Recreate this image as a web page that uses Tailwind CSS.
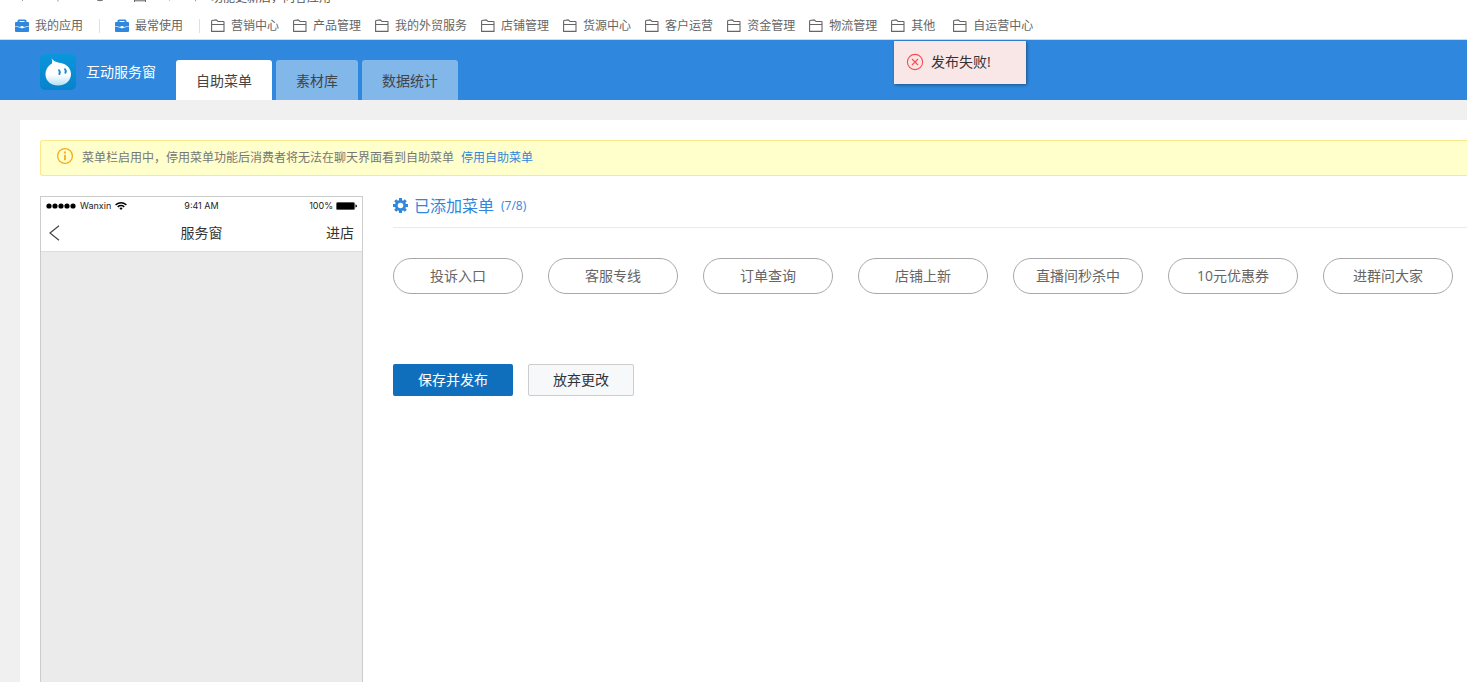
<!DOCTYPE html>
<html lang="zh-CN">
<head>
<meta charset="utf-8">
<meta name="viewport" content="width=device-width, initial-scale=1">
<title>互动服务窗</title>
<script src="https://cdn.jsdelivr.net/npm/@tailwindcss/browser@4"></script>
</head>
<body class="flex h-screen flex-col overflow-hidden bg-[#f0f0f0] font-['Open_Sans','Noto_Sans_CJK_SC',sans-serif] text-sm text-[#666]">
<svg class="hidden" aria-hidden="true">
  <symbol id="folder" viewBox="0 0 14 14"><path d="M.6 12.400V1.900q0-.4.400-.4L5.200.900 7 2.500H12.500q.5 0 .5.500V12.400zM.6 5.500H13" fill="none" stroke="#666" stroke-width="1.100"/></symbol>
  <symbol id="case" viewBox="0 0 14 14"><path fill-rule="evenodd" d="M2.500 3V2Q2.500 .5 4 .5h6Q11.500 .5 11.500 2v1H13q1 0 1 1v3L8.600 8 8.200 7H5.800l-.4 1L0 7V4q0-1 1-1zM4.500 3h5V2h-5z" fill="#2f88dd"/><path d="M0 7.600 5.400 8.800Q7 9.800 8.600 8.800L14 7.600V12q0 1-1 1H1q-1 0-1-1z" fill="#2f88dd"/></symbol>
</svg>

<nav class="shrink-0 border-b border-[#cfdbe6] bg-white text-xs" aria-label="应用导航">
  <div class="flex h-[3px] items-end overflow-hidden whitespace-nowrap text-[#555]">
    <svg class="h-[3px] w-[211px] shrink-0" viewBox="0 0 211 3" fill="none" stroke="#999" aria-hidden="true"><path d="M22.500 0v1M57.500 0l1 1.500M169.500 0v.6M195.500 0v1.200"/><path d="M97 0q3 1.500 6 0M134.500 0v2M145.500 0v2M135 .8h10" stroke="#666"/></svg>
    <span class="leading-[10px]">功能更新后，问答应用</span>
  </div>
  <div class="flex h-9 items-center pt-3 pb-0.5 pl-[15px] whitespace-nowrap">
    <a href="#" class="flex items-center gap-1.5"><svg class="size-3.5"><use href="#case"/></svg>我的应用</a>
    <span class="mr-[15px] ml-4 h-3.5 w-px bg-[#e0e0e0]"></span>
    <a href="#" class="flex items-center gap-1.5"><svg class="size-3.5"><use href="#case"/></svg>最常使用</a>
    <span class="mr-[11px] ml-4 h-3.5 w-px bg-[#e0e0e0]"></span>
    <div class="flex items-center gap-3.5">
      <a href="#" class="flex items-center gap-1.5"><svg class="size-3.5"><use href="#folder"/></svg>营销中心</a>
      <a href="#" class="flex items-center gap-1.5"><svg class="size-3.5"><use href="#folder"/></svg>产品管理</a>
      <a href="#" class="flex items-center gap-1.5"><svg class="size-3.5"><use href="#folder"/></svg>我的外贸服务</a>
      <a href="#" class="flex items-center gap-1.5"><svg class="size-3.5"><use href="#folder"/></svg>店铺管理</a>
      <a href="#" class="flex items-center gap-1.5"><svg class="size-3.5"><use href="#folder"/></svg>货源中心</a>
      <a href="#" class="flex items-center gap-1.5"><svg class="size-3.5"><use href="#folder"/></svg>客户运营</a>
      <a href="#" class="flex items-center gap-1.5"><svg class="size-3.5"><use href="#folder"/></svg>资金管理</a>
      <a href="#" class="flex items-center gap-1.5"><svg class="size-3.5"><use href="#folder"/></svg>物流管理</a>
      <a href="#" class="mr-1 flex items-center gap-1.5"><svg class="size-3.5"><use href="#folder"/></svg>其他</a>
      <a href="#" class="flex items-center gap-1.5"><svg class="size-3.5"><use href="#folder"/></svg>自运营中心</a>
    </div>
  </div>
</nav>

<header class="flex h-[60px] shrink-0 items-end bg-[#2f88dd] pl-10">
  <div class="mr-5 flex h-full items-center gap-2.5 pt-1 text-white">
    <svg class="size-9" viewBox="0 0 36 36" aria-hidden="true">
      <defs><linearGradient id="lg" x2="0" y2="1"><stop stop-color="#0a96dd"/><stop offset="1" stop-color="#0783cb"/></linearGradient>
      <linearGradient id="wg" x2="0" y2="1"><stop offset=".6" stop-color="#fff"/><stop offset="1" stop-color="#b5dff7"/></linearGradient></defs>
      <rect width="36" height="36" rx="5" fill="url(#lg)"/>
      <path d="M11.500 4.500Q13.500 7.500 18 8.500C26 9 31 14 31 20C31 27 25 31.500 18 31.500S5.500 27 5.500 20.500C5.500 15 8.500 11.500 12 9.500Q12.800 7.500 11.500 4.500Z" fill="url(#wg)"/>
      <path d="M19 16.200q1.400 1.600.4 3.800M25 15.200q1.400 1.600.4 3.600" fill="none" stroke="#1490d8" stroke-width="2" stroke-linecap="round"/>
    </svg>
    <h1>互动服务窗</h1>
  </div>
  <nav class="flex gap-1 text-[#444]" aria-label="主菜单">
    <a href="#" class="flex h-10 items-center rounded-t-[3px] bg-white px-5 pt-0.5" aria-current="page">自助菜单</a>
    <a href="#" class="flex h-10 items-center rounded-t-[3px] bg-[#82b7ea] px-5 pt-0.5">素材库</a>
    <a href="#" class="flex h-10 items-center rounded-t-[3px] bg-[#82b7ea] px-5 pt-0.5">数据统计</a>
  </nav>
</header>

<main class="mt-5 ml-5 flex min-h-0 flex-1 flex-col bg-white pt-5 pl-5">
  <div class="flex h-9 shrink-0 items-center rounded-l-[3px] border border-r-0 border-[#fbe78c] bg-[#ffffcb] pl-4 text-xs text-[#777]">
    <svg class="mr-[9px] mb-1 size-4 overflow-visible" viewBox="0 0 16 16" fill="none" stroke="#fbab18" aria-hidden="true"><circle cx="8" cy="8" r="7.400" stroke-width="1.300"/><path d="M8 3.500v2M8 6.800v5.400" stroke-width="1.800"/></svg>
    <p>菜单栏启用中，停用菜单功能后消费者将无法在聊天界面看到自助菜单</p>
    <a href="#" class="ml-[7px] text-[#2f88dd]">停用自助菜单</a>
  </div>

  <div class="mt-5 flex min-h-0 flex-1">
    <section class="w-[323px] shrink-0 border border-b-0 border-[#ccc] bg-[#ebebeb]" aria-label="手机预览">
      <div class="h-[55px] border-b border-[#ddd] bg-white text-[#333]">
        <div class="grid h-[18px] grid-cols-3 items-center px-[5px] font-['Inter',sans-serif] text-[9px] text-[#222]">
          <div class="flex items-center gap-1">
            <svg class="h-[6px] w-[30px]" viewBox="0 0 30 6" aria-hidden="true"><circle cx="3" cy="3" r="2.600"/><circle cx="9" cy="3" r="2.600"/><circle cx="15" cy="3" r="2.600"/><circle cx="21" cy="3" r="2.600"/><circle cx="27" cy="3" r="2.600"/></svg>
            <span>Wanxin</span>
            <svg class="h-2 w-3" viewBox="0 0 12 8" fill="none" stroke="#000" stroke-width="1.500" aria-hidden="true"><path d="M.6 2.800Q6-1.200 11.400 2.800M2.700 4.800Q6 2.300 9.300 4.800"/><path d="M4.300 6.100Q6 4.900 7.700 6.100L6 7.900z" fill="#000" stroke="none"/></svg>
          </div>
          <span class="text-center">9:41 AM</span>
          <div class="flex items-center justify-end gap-[3px]">
            <span>100%</span>
            <svg class="h-2 w-[21px]" viewBox="0 0 21 8" aria-hidden="true"><rect x=".3" y=".3" width="18.400" height="7.400" rx="1.500" stroke="#777" stroke-width=".6"/><path d="M19.500 2.500q1.500.2 1.500 1.500t-1.500 1.500z"/></svg>
          </div>
        </div>
        <div class="grid h-9 grid-cols-3 items-center px-2">
          <button type="button" aria-label="返回"><svg class="size-4" viewBox="0 0 16 16" fill="none" stroke="#444" stroke-width="1.200"><path d="M10 .8 1 8l9 7.200"/></svg></button>
          <h2 class="text-center">服务窗</h2>
          <a href="#" class="text-right">进店</a>
        </div>
      </div>
    </section>

    <section class="ml-[30px] min-w-0 flex-1">
      <div class="flex h-8 items-start border-b border-[#eaeaea] text-[#2f88dd]">
        <svg class="mt-[2px] mr-1.5 size-[15px]" viewBox="0 0 15 15" aria-hidden="true"><path fill="none" stroke="#2f88dd" stroke-width="3" d="M7.500 0v3M7.500 12v3M0 7.500h3M12 7.500h3M2.200 2.200l2.100 2.100M10.700 10.700l2.100 2.100M2.200 12.800l2.100-2.100M10.700 4.300l2.100-2.100"/><circle cx="7.500" cy="7.500" r="4.200" fill="none" stroke="#2f88dd" stroke-width="2.800"/></svg>
        <h2 class="text-base leading-5">已添加菜单</h2>
        <span class="ml-[7px] text-xs leading-5">(7/8)</span>
      </div>
      <div class="mt-[30px] flex gap-[25px] text-[#666]">
        <button type="button" class="h-9 w-[130px] shrink-0 rounded-full border border-[#a8a8a8]">投诉入口</button>
        <button type="button" class="h-9 w-[130px] shrink-0 rounded-full border border-[#a8a8a8]">客服专线</button>
        <button type="button" class="h-9 w-[130px] shrink-0 rounded-full border border-[#a8a8a8]">订单查询</button>
        <button type="button" class="h-9 w-[130px] shrink-0 rounded-full border border-[#a8a8a8]">店铺上新</button>
        <button type="button" class="h-9 w-[130px] shrink-0 rounded-full border border-[#a8a8a8]">直播间秒杀中</button>
        <button type="button" class="h-9 w-[130px] shrink-0 rounded-full border border-[#a8a8a8]">10元优惠券</button>
        <button type="button" class="h-9 w-[130px] shrink-0 rounded-full border border-[#a8a8a8]">进群问大家</button>
      </div>
      <div class="mt-[70px] flex gap-[15px]">
        <button type="button" class="h-8 w-[120px] rounded-xs bg-[#106fbc] text-white">保存并发布</button>
        <button type="button" class="h-8 w-[106px] rounded-xs border border-[#ccc] bg-[#f7f8fa] text-[#333]">放弃更改</button>
      </div>
    </section>
  </div>
</main>

<div role="alert" class="absolute top-[41px] left-[894px] flex h-[43px] w-[132px] items-center gap-2 bg-[#f9e6e7] pb-0.5 pl-[13px] text-[#333] shadow-[1px_1px_3px_rgba(0,0,0,0.4)]">
  <svg class="size-4 overflow-visible" viewBox="0 0 16 16" fill="none" stroke="#fb4b50" stroke-width="1.100" aria-hidden="true"><circle cx="8" cy="8" r="7.600"/><path d="m5 5 6 6M11 5l-6 6"/></svg>
  <span>发布失败!</span>
</div>
</body>
</html>
